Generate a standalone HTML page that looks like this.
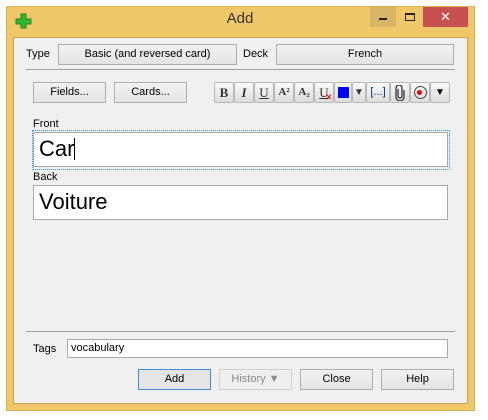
<!DOCTYPE html>
<html><head><style>
*{box-sizing:border-box;margin:0;padding:0}
body{width:488px;height:420px;background:#fff;position:relative;font-family:"Liberation Sans",sans-serif;font-size:11px;color:#000;overflow:hidden}
.a{position:absolute}
.win{left:6px;top:6px;width:469px;height:405px;background:#f0c869;border:1px solid #d8b050}
.client{left:13px;top:37px;width:455px;height:367px;background:#f0f0f0;border:1px solid #c8a450}
.btn{position:absolute;background:linear-gradient(#f2f2f2,#e4e4e4);border:1px solid #adadad;text-align:center;line-height:18px;font-size:11px}
.tb{position:absolute;top:82px;height:21px;background:linear-gradient(#fafafa,#dcdcdc);border:1px solid #b8b8b8;border-radius:2px;text-align:center;line-height:19px;font-family:"Liberation Serif",serif;font-weight:bold;font-size:13px;color:#333}
.line{position:absolute;height:1px;background:#a0a0a0}
.field{position:absolute;background:#fff;border:1px solid #a9a9a9;font-size:22px;padding-left:5px;line-height:32px}
</style></head><body>
<div class="a win"></div>
<svg class="a" style="left:14px;top:13px" width="20" height="16"><path d="M7 1h5v5h5v5h-5v4h-5v-4H2V6h5z" fill="#2fb82f" stroke="#1b8a1b"/></svg>
<div class="a" style="left:0;top:10px;width:480px;text-align:center;font-size:15px;color:#333">Add</div>
<div class="a" style="left:370px;top:7px;width:26px;height:20px;background:#d8b668"></div>
<div class="a" style="left:379px;top:18px;width:8px;height:2px;background:#222"></div>
<div class="a" style="left:405px;top:13px;width:10px;height:8px;border:1px solid #222;border-top-width:2px"></div>
<div class="a" style="left:423px;top:7px;width:45px;height:20px;background:#c75050;color:#fff;text-align:center;font-size:13px;line-height:20px">✕</div>
<div class="a client"></div>

<div class="a" style="left:26px;top:48px">Type</div>
<div class="btn" style="left:58px;top:44px;width:179px;height:21px">Basic (and reversed card)</div>
<div class="a" style="left:243px;top:48px">Deck</div>
<div class="btn" style="left:276px;top:44px;width:178px;height:21px">French</div>
<div class="line" style="left:26px;top:69px;width:429px"></div>

<div class="btn" style="left:33px;top:82px;width:73px;height:21px">Fields...</div>
<div class="btn" style="left:114px;top:82px;width:73px;height:21px">Cards...</div>
<div class="tb" style="left:214px;width:20px">B</div>
<div class="tb" style="left:234px;width:20px;font-style:italic">I</div>
<div class="tb" style="left:254px;width:20px;text-decoration:underline;font-weight:normal">U</div>
<div class="tb" style="left:274px;width:20px;font-size:11px">A²</div>
<div class="tb" style="left:294px;width:20px;font-size:11px">A₂</div>
<div class="tb" style="left:314px;width:20px;font-weight:normal;text-decoration:underline">U<span style="position:absolute;left:10px;top:5px;color:#e00;font-size:9px;font-family:'Liberation Sans'">✕</span></div>
<div class="tb" style="left:334px;width:18px"><div style="margin:4px auto;width:11px;height:11px;background:#00f"></div></div>
<div class="tb" style="left:352px;width:14px;font-size:10px">▼</div>
<div class="tb" style="left:366px;width:24px;font-family:'Liberation Sans';font-weight:normal;color:#036;font-size:11px">[...]</div>
<div class="tb" style="left:390px;width:20px;font-weight:normal">
<svg width="10" height="16" style="margin-top:2px"><path d="M3 4v7a2 2 0 0 0 4 0V3a3 3 0 0 0-6 0v9a4 4 0 0 0 8 0V5" fill="none" stroke="#333" stroke-width="1.3"/></svg></div>
<div class="tb" style="left:410px;width:20px"><div style="margin:3px auto;width:13px;height:13px;border:1.5px solid #444;border-radius:50%;position:relative"><div style="position:absolute;left:2.5px;top:2.5px;width:5px;height:5px;background:#e00;border-radius:50%"></div></div></div>
<div class="tb" style="left:430px;width:20px;font-size:10px;color:#000">▼</div>

<div class="a" style="left:33px;top:118px">Front</div>
<div class="a" style="left:32px;top:130px;width:418px;height:40px;border:1px dotted #3399ff"></div>
<div class="field" style="left:33px;top:132px;width:415px;height:35px">Car<span style="display:inline-block;width:1px;height:22px;background:#000;vertical-align:-4px"></span></div>
<div class="a" style="left:33px;top:171px">Back</div>
<div class="field" style="left:33px;top:185px;width:415px;height:35px">Voiture</div>

<div class="line" style="left:26px;top:331px;width:429px"></div>
<div class="a" style="left:33px;top:343px">Tags</div>
<div class="a" style="left:67px;top:339px;width:381px;height:19px;background:#fff;border:1px solid #a9a9a9;padding-left:3px;line-height:17px">vocabulary</div>
<div class="btn" style="left:138px;top:369px;width:73px;height:21px;border-color:#3c8fe0;background:#e5e5e5">Add</div>
<div class="btn" style="left:219px;top:369px;width:73px;height:21px;color:#8a8a8a;border-color:#cfcfcf;background:#efefef">History ▼</div>
<div class="btn" style="left:300px;top:369px;width:73px;height:21px">Close</div>
<div class="btn" style="left:381px;top:369px;width:73px;height:21px">Help</div>
</body></html>
